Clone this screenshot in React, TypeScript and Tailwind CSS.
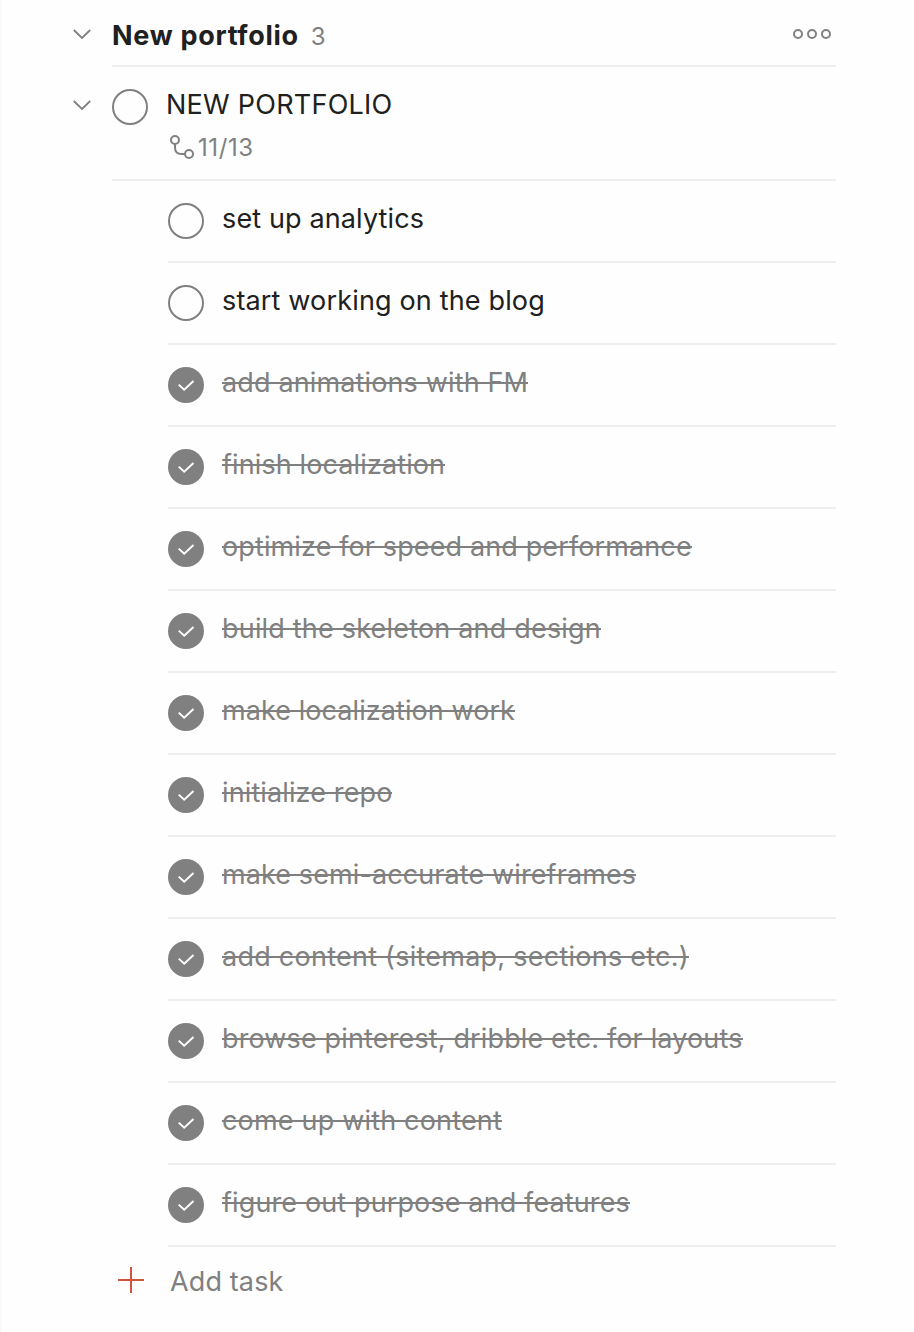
type Task = { title: string; done: boolean; tracking: string };

const tasks: Task[] = [
  { title: "set up analytics", done: false, tracking: "tracking-[0.13px]" },
  { title: "start working on the blog", done: false, tracking: "tracking-[0.16px]" },
  { title: "add animations with FM", done: true, tracking: "tracking-[0.14px]" },
  { title: "finish localization", done: true, tracking: "tracking-[0.11px]" },
  { title: "optimize for speed and performance", done: true, tracking: "tracking-[0.12px]" },
  { title: "build the skeleton and design", done: true, tracking: "tracking-[0.19px]" },
  { title: "make localization work", done: true, tracking: "tracking-[0.07px]" },
  { title: "initialize repo", done: true, tracking: "tracking-[0.12px]" },
  { title: "make semi-accurate wireframes", done: true, tracking: "tracking-[0.1px]" },
  { title: "add content (sitemap, sections etc.)", done: true, tracking: "tracking-[0.25px]" },
  { title: "browse pinterest, dribble etc. for layouts", done: true, tracking: "tracking-[0.14px]" },
  { title: "come up with content", done: true, tracking: "tracking-[0.18px]" },
  { title: "figure out purpose and features", done: true, tracking: "tracking-[0.12px]" },
];

function Chevron() {
  return (
    <svg className="h-5 w-5 shrink-0" viewBox="0 0 20 20" fill="none" stroke="#808080" strokeWidth="1.8">
      <path d="M1.8 6 10 14 18.2 6" />
    </svg>
  );
}

function Check({ done }: { done: boolean }) {
  return (
    <span
      className={
        done
          ? "flex h-9 w-9 shrink-0 rounded-full bg-[#808080]"
          : "flex h-9 w-9 shrink-0 rounded-full border-2 border-[#808080]"
      }
    >
      {done && (
        <svg className="h-9 w-9" viewBox="0 0 36 36" fill="none" stroke="#fff" strokeWidth="1.9">
          <path d="m10.7 17.6 5.5 5L25.5 14" />
        </svg>
      )}
    </span>
  );
}

export default function App() {
  return (
    <main className="h-[1332px] w-[914px] overflow-hidden border-l-2 border-[#fafafa] bg-[#fefefe] pl-[70px] pr-[78px] font-['Inter',sans-serif] text-[27px] leading-8 text-[#202020]">
      <header className="flex h-[67px]">
        <div className="w-10 pt-6">
          <Chevron />
        </div>
        <div className="flex flex-1 border-b-2 border-[#eeeeee] pt-5">
          <h1 className="whitespace-nowrap font-bold tracking-[0.7px]">New portfolio</h1>
          <span className="ml-3 pt-px text-2xl leading-8 text-[#808080]">3</span>
          <svg className="ml-auto mr-1 mt-2 h-3 w-10" viewBox="0 0 40 12" fill="none" stroke="#808080" strokeWidth="2">
            <circle cx="6" cy="6" r="4" />
            <circle cx="20" cy="6" r="4" />
            <circle cx="34" cy="6" r="4" />
          </svg>
        </div>
      </header>

      <section className="flex h-[114px]">
        <div className="w-10 pt-7">
          <Chevron />
        </div>
        <div className="flex flex-1 border-b-2 border-[#eeeeee] pt-[22px]">
          <Check done={false} />
          <div className="ml-[18px]">
            <h2 className="whitespace-nowrap tracking-[0.25px]">NEW PORTFOLIO</h2>
            <div className="mt-[11px] flex text-2xl leading-8 text-[#808080]">
              <svg className="ml-1 mt-[3px] h-6 w-6" viewBox="0 0 24 24" fill="none" stroke="currentColor" strokeWidth="2">
                <circle cx="5" cy="5" r="4" />
                <circle cx="19" cy="19" r="4" />
                <path d="M5 9v3.5C5 16.5 7.5 19 11.5 19H15" />
              </svg>
              <span className="ml-1 tracking-[0.6px]">11/13</span>
            </div>
          </div>
        </div>
      </section>

      <ul className="pl-24">
        {tasks.map((task) => (
          <li key={task.title} className="flex h-[82px] border-b-2 border-[#eeeeee] pt-[22px]">
            <Check done={task.done} />
            <span
              className={
                "ml-[18px] whitespace-nowrap " +
                task.tracking +
                (task.done ? " relative h-8 text-[#808080] after:absolute after:left-0 after:top-[15px] after:h-0.5 after:w-full after:bg-[#808080] after:content-['']" : "")
              }
            >
              {task.title}
            </span>
          </li>
        ))}
      </ul>

      <button className="flex pl-[46px] pt-[19px] text-[#808080]">
        <svg className="mt-px h-[26px] w-[26px]" viewBox="0 0 26 26" fill="none" stroke="#d1523f" strokeWidth="2">
          <path d="M13 0v26M0 13h26" />
        </svg>
        <span className="ml-[26px] tracking-[0.12px]">Add task</span>
      </button>
    </main>
  );
}
